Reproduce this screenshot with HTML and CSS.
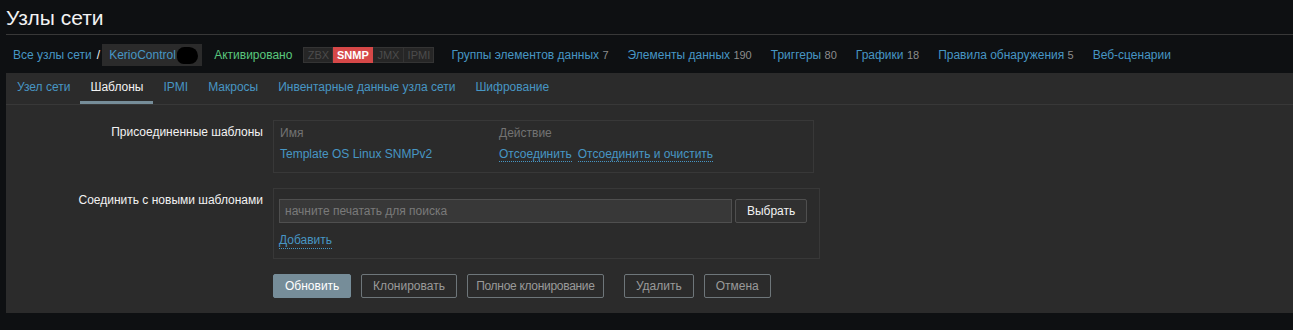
FILE: index.html
```html
<!DOCTYPE html>
<html lang="ru">
<head>
<meta charset="utf-8">
<title>Узлы сети</title>
<link rel="stylesheet" href="styles.css">
</head>
<body>
<div class="page">
  <header class="header">
    <h1 class="title">Узлы сети</h1>
  </header>
  <nav class="objnav">
    <a class="link" href="#">Все узлы сети</a>
    <span class="slash">/</span>
    <span class="hostbox"><a class="link" href="#">KerioControl</a><span class="blob"></span></span>
    <span class="enabled">Активировано</span>
    <span class="status">
      <span class="badge off b-zbx">ZBX</span><span class="badge on b-snmp">SNMP</span><span class="badge off b-jmx">JMX</span><span class="badge off b-ipmi">IPMI</span>
    </span>
    <a class="link item" href="#">Группы элементов данных <span class="cnt">7</span></a>
    <a class="link item" href="#">Элементы данных <span class="cnt">190</span></a>
    <a class="link item" href="#">Триггеры <span class="cnt">80</span></a>
    <a class="link item" href="#">Графики <span class="cnt">18</span></a>
    <a class="link item" href="#">Правила обнаружения <span class="cnt">5</span></a>
    <a class="link item" href="#">Веб-сценарии</a>
  </nav>
  <section class="panel">
    <ul class="tabs">
      <li class="tab"><a href="#">Узел сети</a></li>
      <li class="tab active"><a href="#">Шаблоны</a></li>
      <li class="tab"><a href="#">IPMI</a></li>
      <li class="tab"><a href="#">Макросы</a></li>
      <li class="tab"><a href="#">Инвентарные данные узла сети</a></li>
      <li class="tab"><a href="#">Шифрование</a></li>
    </ul>
    <div class="form">
      <div class="label">Присоединенные шаблоны</div>
      <div class="field">
        <div class="box linked">
          <div class="trow head">
            <div class="c1">Имя</div>
            <div class="c2">Действие</div>
          </div>
          <div class="trow data">
            <div class="c1"><a class="link" href="#">Template OS Linux SNMPv2</a></div>
            <div class="c2"><a class="link dotted" href="#">Отсоединить</a><a class="link dotted" href="#">Отсоединить и очистить</a></div>
          </div>
        </div>
      </div>

      <div class="label">Соединить с новыми шаблонами</div>
      <div class="field">
        <div class="box newt">
          <div class="search">
            <input class="input" type="text" placeholder="начните печатать для поиска">
            <button class="btn-grey" type="button">Выбрать</button>
          </div>
          <a class="link dotted add" href="#">Добавить</a>
        </div>
      </div>

      <div class="label"></div>
      <div class="field buttons">
        <button class="btn primary" type="button">Обновить</button>
        <button class="btn alt" type="button">Клонировать</button>
        <button class="btn alt full" type="button">Полное клонирование</button>
        <button class="btn alt wide-gap" type="button">Удалить</button>
        <button class="btn alt" type="button">Отмена</button>
      </div>
    </div>
  </section>
</div>
</body>
</html>
```

FILE: styles.css
```css
html, body {
  margin: 0;
  padding: 0;
  background: #0e1012;
  font-family: "Liberation Sans", Arial, sans-serif;
  font-size: 12px;
  color: #f2f2f2;
}

.page {
  padding-left: 6px;
}

.header {
  height: 35px;
  border-bottom: 1px solid #383838;
  box-sizing: border-box;
}

.title {
  margin: 0;
  padding-top: 5px;
  font-size: 21px;
  line-height: 25px;
  font-weight: normal;
  color: #f2f2f2;
}

.link {
  color: #4796c4;
  text-decoration: none;
}

.objnav {
  display: flex;
  align-items: center;
  height: 22px;
  padding: 9px 0 7px 7px;
  white-space: nowrap;
}

.slash {
  margin: 0 2px 0 5px;
  color: #f2f2f2;
}

.hostbox {
  display: flex;
  align-items: center;
  height: 22px;
  padding: 0 2px 0 7px;
  background: #2b2b2b;
  box-sizing: border-box;
  width: 100px;
}

.blob {
  display: inline-block;
  flex: none;
  width: 21px;
  height: 17px;
  margin-left: 1px;
  background: #000;
  border-radius: 9px 11px 10px 8px;
}

.enabled {
  margin-left: 12px;
  color: #59c77d;
}

.status {
  display: flex;
  margin-left: 11px;
  margin-right: 17px;
  font-size: 11px;
  line-height: 14px;
}

.badge {
  display: block;
  box-sizing: border-box;
  text-align: center;
  border: 1px solid #343434;
  background: #262626;
  color: #4c4c4c;
}

.badge + .badge {
  border-left: 0;
}

.b-zbx { width: 30px; }
.b-snmp { width: 40px; }
.b-jmx { width: 31px; }
.b-ipmi { width: 30px; }

.badge.on {
  background: #d64848;
  border-color: #d64848;
  color: #ffffff;
  font-weight: bold;
}

.item {
  margin-right: 19px;
}

.cnt {
  color: #8c8c8c;
  font-size: 11px;
}

.panel {
  background: #2b2b2b;
  padding-bottom: 15px;
}

.tabs {
  list-style: none;
  margin: 0;
  padding: 0 0 0 1px;
  display: flex;
  border-bottom: 1px solid #383838;
}

.tab a {
  display: block;
  padding: 0 10px;
  line-height: 28px;
  border-bottom: 3px solid transparent;
  color: #4796c4;
  text-decoration: none;
}

.tab.active a {
  color: #f2f2f2;
  border-bottom-color: #768d99;
}

.form {
  display: grid;
  grid-template-columns: 257px auto;
  column-gap: 10px;
  row-gap: 15px;
  padding-top: 15px;
  align-items: start;
}

.label {
  text-align: right;
  padding-top: 4px;
  line-height: 16px;
  color: #f2f2f2;
}

.box {
  border: 1px solid #383838;
  box-sizing: border-box;
}

.linked {
  width: 541px;
  padding: 4px 6px 5px 6px;
}

.trow {
  display: flex;
}

.trow.head {
  line-height: 16px;
  color: #737373;
}

.trow.data {
  height: 26px;
  align-items: center;
}

.c1 {
  width: 219px;
}

.c2 .dotted + .dotted {
  margin-left: 6px;
}

.dotted {
  border-bottom: 1px dotted #4796c4;
}

.newt {
  width: 547px;
  padding: 10px 12px 9px 5px;
}

.search {
  display: flex;
  gap: 3px;
}

.input {
  width: 454px;
  height: 24px;
  box-sizing: border-box;
  padding: 0 5px;
  background: #383838;
  border: 1px solid #4f4f4f;
  color: #f2f2f2;
  font-family: inherit;
  font-size: 12px;
  outline: none;
}

.input::placeholder {
  color: #7a7a7a;
}

.btn-grey {
  width: 72px;
  height: 24px;
  background: #303030;
  border: 1px solid #4f4f4f;
  border-radius: 2px;
  color: #f2f2f2;
  font-family: inherit;
  font-size: 12px;
  padding: 0;
}

.add {
  display: inline-block;
  margin-top: 10px;
  line-height: 15px;
}

.buttons {
  display: flex;
  gap: 10px;
}

.btn {
  height: 24px;
  padding: 0 11px;
  border-radius: 2px;
  font-family: inherit;
  font-size: 12px;
  white-space: nowrap;
}

.btn.primary {
  background: #768d99;
  border: 1px solid #768d99;
  color: #ffffff;
  width: 78px;
}

.btn.alt {
  background: transparent;
  border: 1px solid #6e767a;
  color: #9a9a9a;
}

.btn.full {
  width: 137px;
  padding: 0;
  letter-spacing: -0.3px;
}

.btn.wide-gap {
  margin-left: 10px;
}
```
